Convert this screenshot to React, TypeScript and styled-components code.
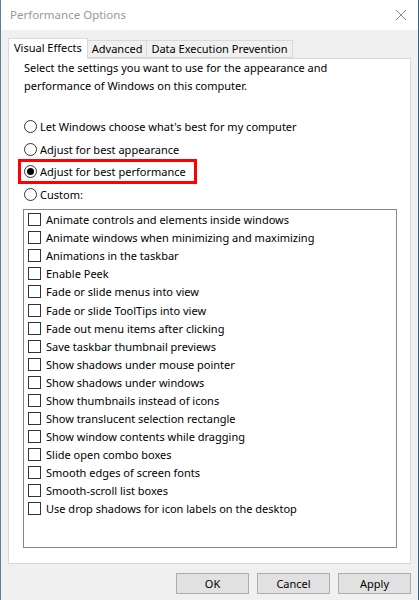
import React, { useState } from "react";
import styled, { createGlobalStyle } from "styled-components";

const GlobalStyle = createGlobalStyle`
  html, body {
    margin: 0;
    padding: 0;
    background: #f0f0f0;
  }
  * {
    box-sizing: border-box;
  }
`;

const Window = styled.div`
  width: 419px;
  height: 600px;
  display: flex;
  flex-direction: column;
  border-left: 1px solid #5b7e90;
  border-right: 1px solid #2f6488;
  background: #f0f0f0;
  font-family: "Segoe UI", "Noto Sans", "Open Sans", sans-serif;
  font-size: 11px;
  color: #000;
  overflow: hidden;
`;

const TitleBar = styled.div`
  height: 30px;
  flex: none;
  background: #fff;
  display: flex;
  align-items: center;
  justify-content: space-between;
  padding: 0 10px 1px 9px;
`;

const Title = styled.span`
  color: #999;
  font-size: 11.5px;
`;

const CloseIcon = styled.svg`
  width: 12px;
  height: 12px;
  margin-right: 1px;
`;

const Body = styled.div`
  flex: 1;
  display: flex;
  flex-direction: column;
  padding: 7px 7px 0 7px;
`;

const TabStrip = styled.div`
  display: flex;
  align-items: flex-end;
  height: 21px;
  position: relative;
  z-index: 1;
`;

const Tab = styled.div<{ $active?: boolean; $leftless?: boolean }>`
  height: ${(p) => (p.$active ? "21px" : "18px")};
  margin-bottom: ${(p) => (p.$active ? "-1px" : "0")};
  padding: ${(p) => (p.$active ? "0 5px 3px 5px" : "0 4px 1px 4px")};
  display: flex;
  align-items: center;
  background: ${(p) => (p.$active ? "#fff" : "#f0f0f0")};
  border: 1px solid #d9d9d9;
  border-bottom: ${(p) => (p.$active ? "none" : "1px solid #d9d9d9")};
  border-left: ${(p) => (p.$leftless ? "none" : "1px solid #d9d9d9")};
  white-space: nowrap;
`;

const Panel = styled.div`
  height: 506px;
  background: #fff;
  border: 1px solid #d9d9d9;
  padding: 0 13px 0 15px;
  display: flex;
  flex-direction: column;
`;

const Intro = styled.p`
  margin: 0 0 20px 0;
  line-height: 18px;
`;

const RadioGroup = styled.div`
  display: flex;
  flex-direction: column;
`;

const RadioRow = styled.label`
  position: relative;
  display: flex;
  align-items: center;
  height: 22.7px;
  gap: 3px;
  align-self: flex-start;
  cursor: default;
`;

const RadioCircle = styled.span<{ $checked?: boolean }>`
  width: 13px;
  height: 13px;
  border-radius: 50%;
  border: 1px solid #333;
  background: #fff;
  display: flex;
  align-items: center;
  justify-content: center;
  flex: none;

  &::after {
    content: "";
    width: 7px;
    height: 7px;
    border-radius: 50%;
    background: ${(p) => (p.$checked ? "#000" : "transparent")};
  }
`;

const Highlight = styled.span`
  position: absolute;
  left: -6px;
  right: -11px;
  top: -1px;
  bottom: -1px;
  border: 3px solid #ff0000;
  pointer-events: none;
`;

const ListBox = styled.div`
  margin: 3px 0 0 -1px;
  height: 339px;
  border: 1px solid #828790;
  padding: 1px 0 0 4px;
  display: flex;
  flex-direction: column;
`;

const CheckRow = styled.label`
  display: flex;
  align-items: center;
  height: 18.06px;
  gap: 5px;
`;

const CheckBox = styled.span`
  width: 13px;
  height: 13px;
  border: 1px solid #333;
  background: #fff;
  flex: none;
`;

const ButtonRow = styled.div`
  display: flex;
  justify-content: flex-end;
  gap: 8px;
  margin-top: 9px;
`;

const Button = styled.button`
  width: 73px;
  height: 21px;
  background: #e1e1e1;
  border: 1px solid #adadad;
  font-family: inherit;
  font-size: 11px;
  color: #000;
  padding: 0;
`;

const options = [
  "Let Windows choose what's best for my computer",
  "Adjust for best appearance",
  "Adjust for best performance",
  "Custom:",
];

const effects = [
  "Animate controls and elements inside windows",
  "Animate windows when minimizing and maximizing",
  "Animations in the taskbar",
  "Enable Peek",
  "Fade or slide menus into view",
  "Fade or slide ToolTips into view",
  "Fade out menu items after clicking",
  "Save taskbar thumbnail previews",
  "Show shadows under mouse pointer",
  "Show shadows under windows",
  "Show thumbnails instead of icons",
  "Show translucent selection rectangle",
  "Show window contents while dragging",
  "Slide open combo boxes",
  "Smooth edges of screen fonts",
  "Smooth-scroll list boxes",
  "Use drop shadows for icon labels on the desktop",
];

export default function App() {
  const [selected, setSelected] = useState(2);

  return (
    <>
      <GlobalStyle />
      <Window>
        <TitleBar>
          <Title>Performance Options</Title>
          <CloseIcon viewBox="0 0 12 12">
            <path d="M1 1 L11 11 M11 1 L1 11" stroke="#8a8a8a" strokeWidth="1" fill="none" />
          </CloseIcon>
        </TitleBar>
        <Body>
          <TabStrip>
            <Tab $active>Visual Effects</Tab>
            <Tab $leftless>Advanced</Tab>
            <Tab $leftless>Data Execution Prevention</Tab>
          </TabStrip>
          <Panel>
            <Intro>
              Select the settings you want to use for the appearance and
              <br />
              performance of Windows on this computer.
            </Intro>
            <RadioGroup>
              {options.map((o, i) => (
                <RadioRow key={o} onClick={() => setSelected(i)}>
                  <RadioCircle $checked={selected === i} />
                  {o}
                  {i === 2 && <Highlight />}
                </RadioRow>
              ))}
            </RadioGroup>
            <ListBox>
              {effects.map((e) => (
                <CheckRow key={e}>
                  <CheckBox />
                  {e}
                </CheckRow>
              ))}
            </ListBox>
          </Panel>
          <ButtonRow>
            <Button>OK</Button>
            <Button>Cancel</Button>
            <Button>Apply</Button>
          </ButtonRow>
        </Body>
      </Window>
    </>
  );
}
